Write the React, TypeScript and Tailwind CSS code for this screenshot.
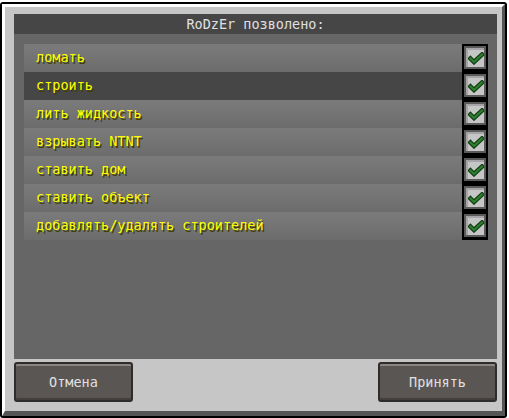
const perms = [
  "ломать",
  "строить",
  "лить жидкость",
  "взрывать NTNT",
  "ставить дом",
  "ставить объект",
  "добавлять/удалять строителей",
];

const font = "font-['DejaVu_Sans_Mono','Liberation_Mono',monospace] text-[13.5px]";

function Check() {
  return (
    <div className="mt-[2px] h-[23px] w-[22px] bg-[#5a5a5a] p-[2px]">
      <div className="flex h-full w-full items-center justify-center border-l-2 border-t-2 border-[#a5a5a5] bg-[#c6c6c6]">
        <svg width="16" height="13" viewBox="0 0 16 13">
          <polyline points="2.5,6.5 6,10 14,2.5" fill="none" stroke="#123d12" strokeWidth="4.5" strokeLinecap="square" />
          <polyline points="2.5,6.5 6,10 14,2.5" fill="none" stroke="#2b8030" strokeWidth="2.2" strokeLinecap="square" />
        </svg>
      </div>
    </div>
  );
}

function McButton({ label }: { label: string }) {
  return (
    <button className="flex h-[40px] w-[119px] items-center justify-center rounded-[3px] border-2 border-[#2f2d2c] bg-[#5a5653] shadow-[inset_0_2px_0_#8c8682,inset_0_-2px_0_#443f3d]">
      <span className={`${font} text-[#e0e0e0]`}>{label}</span>
    </button>
  );
}

export default function App() {
  return (
    <div className="h-[418px] w-[509px] bg-white pt-[2px]">
      <div className="h-[416px] w-[507px] rounded-[3px] bg-black p-[2px]">
        <div className="flex h-full flex-col border-b-[5px] border-l-[3px] border-r-[3px] border-t-[3px] border-b-[#555] border-l-white border-r-[#555] border-t-white bg-[#c6c6c6] pb-[9px] pl-[9px] pr-[5px] pt-[7px]">
          <div className="flex h-[345px] flex-col bg-[#666666]">
            <div className="flex h-[20px] items-center justify-center bg-[#464646]">
              <span className={`${font} text-[#e0e0e0]`}>RoDzEr позволено:</span>
            </div>
            <div className="flex pl-[10px] pt-[10px]">
              <div className="flex w-[438px] flex-col">
                {perms.map((p, i) => (
                  <div
                    key={p}
                    className={
                      i === 1
                        ? "flex h-[28px] items-center bg-[#464646] pl-[12px] pb-[1px]"
                        : "flex h-[28px] items-center bg-linear-to-b from-[#7b7b7b] to-[#6c6c6c] pl-[12px] pb-[1px]"
                    }
                  >
                    <span className={`${font} text-[#ffff00] [text-shadow:1.5px_1.5px_0_#3f3f00]`}>{p}</span>
                  </div>
                ))}
              </div>
              <div className="flex w-[26px] flex-col items-center bg-black">
                {perms.map((p) => (
                  <div key={p} className="h-[28px]">
                    <Check />
                  </div>
                ))}
              </div>
            </div>
          </div>
          <div className="mt-[3px] flex justify-between">
            <McButton label="Отмена" />
            <McButton label="Принять" />
          </div>
        </div>
      </div>
    </div>
  );
}
